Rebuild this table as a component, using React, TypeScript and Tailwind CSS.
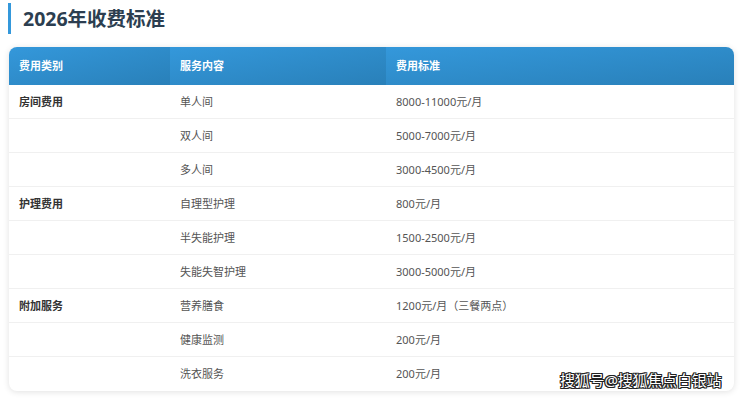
import React from "react";

const rows: [string, string, string][] = [
  ["房间费用", "单人间", "8000-11000元/月"],
  ["", "双人间", "5000-7000元/月"],
  ["", "多人间", "3000-4500元/月"],
  ["护理费用", "自理型护理", "800元/月"],
  ["", "半失能护理", "1500-2500元/月"],
  ["", "失能失智护理", "3000-5000元/月"],
  ["附加服务", "营养膳食", "1200元/月（三餐两点）"],
  ["", "健康监测", "200元/月"],
  ["", "洗衣服务", "200元/月"],
];

const font = { fontFamily: '"Noto Sans", "Noto Sans CJK SC", sans-serif' };

export default function App() {
  return (
    <div className="relative w-[740px] h-[398px] bg-white overflow-hidden" style={font}>
      <div className="ml-[8px] mt-[3px] h-[31px] border-l-[3px] border-[#3498db] pl-[12px] flex items-center">
        <h1 className="text-[19.5px] font-bold text-[#2c3e50] leading-none">2026年收费标准</h1>
      </div>
      <div className="ml-[9px] mt-[13px] w-[725px] rounded-[8px] overflow-hidden bg-white shadow-[0_1px_6px_rgba(0,0,0,0.12)]">
        <div className="flex h-[38px] text-white text-[11px] font-bold">
          <div className="w-[161px] flex items-center pl-[10px] bg-gradient-to-br from-[#3498db] to-[#2980b9]">费用类别</div>
          <div className="w-[216px] flex items-center pl-[10px] bg-gradient-to-br from-[#3498db] to-[#2980b9]">服务内容</div>
          <div className="flex-1 flex items-center pl-[10px] bg-gradient-to-br from-[#3498db] to-[#2980b9]">费用标准</div>
        </div>
        {rows.map((r, i) => (
          <div
            key={i}
            className={`flex h-[34px] pt-[1px] text-[11px] text-[#555] ${i < rows.length - 1 ? "border-b border-[#f0f0f0]" : ""}`}
          >
            <div className="w-[161px] flex items-center pl-[10px] font-bold text-[#333]">{r[0]}</div>
            <div className="w-[216px] flex items-center pl-[10px]">{r[1]}</div>
            <div className="flex-1 flex items-center pl-[10px]">{r[2]}</div>
          </div>
        ))}
      </div>
      <div
        className="absolute left-[560px] top-[373px] text-[15px] text-white leading-none tracking-[-0.2px]"
        style={{ ...font, textShadow: "1px 0 0 #222, -1px 0 0 #222, 0 1px 0 #222, 0 -1px 0 #222, 1px 1px 0 #222, -1px -1px 0 #222, 1px -1px 0 #222, -1px 1px 0 #222" }}
      >
        搜狐号@搜狐焦点白银站
      </div>
    </div>
  );
}
